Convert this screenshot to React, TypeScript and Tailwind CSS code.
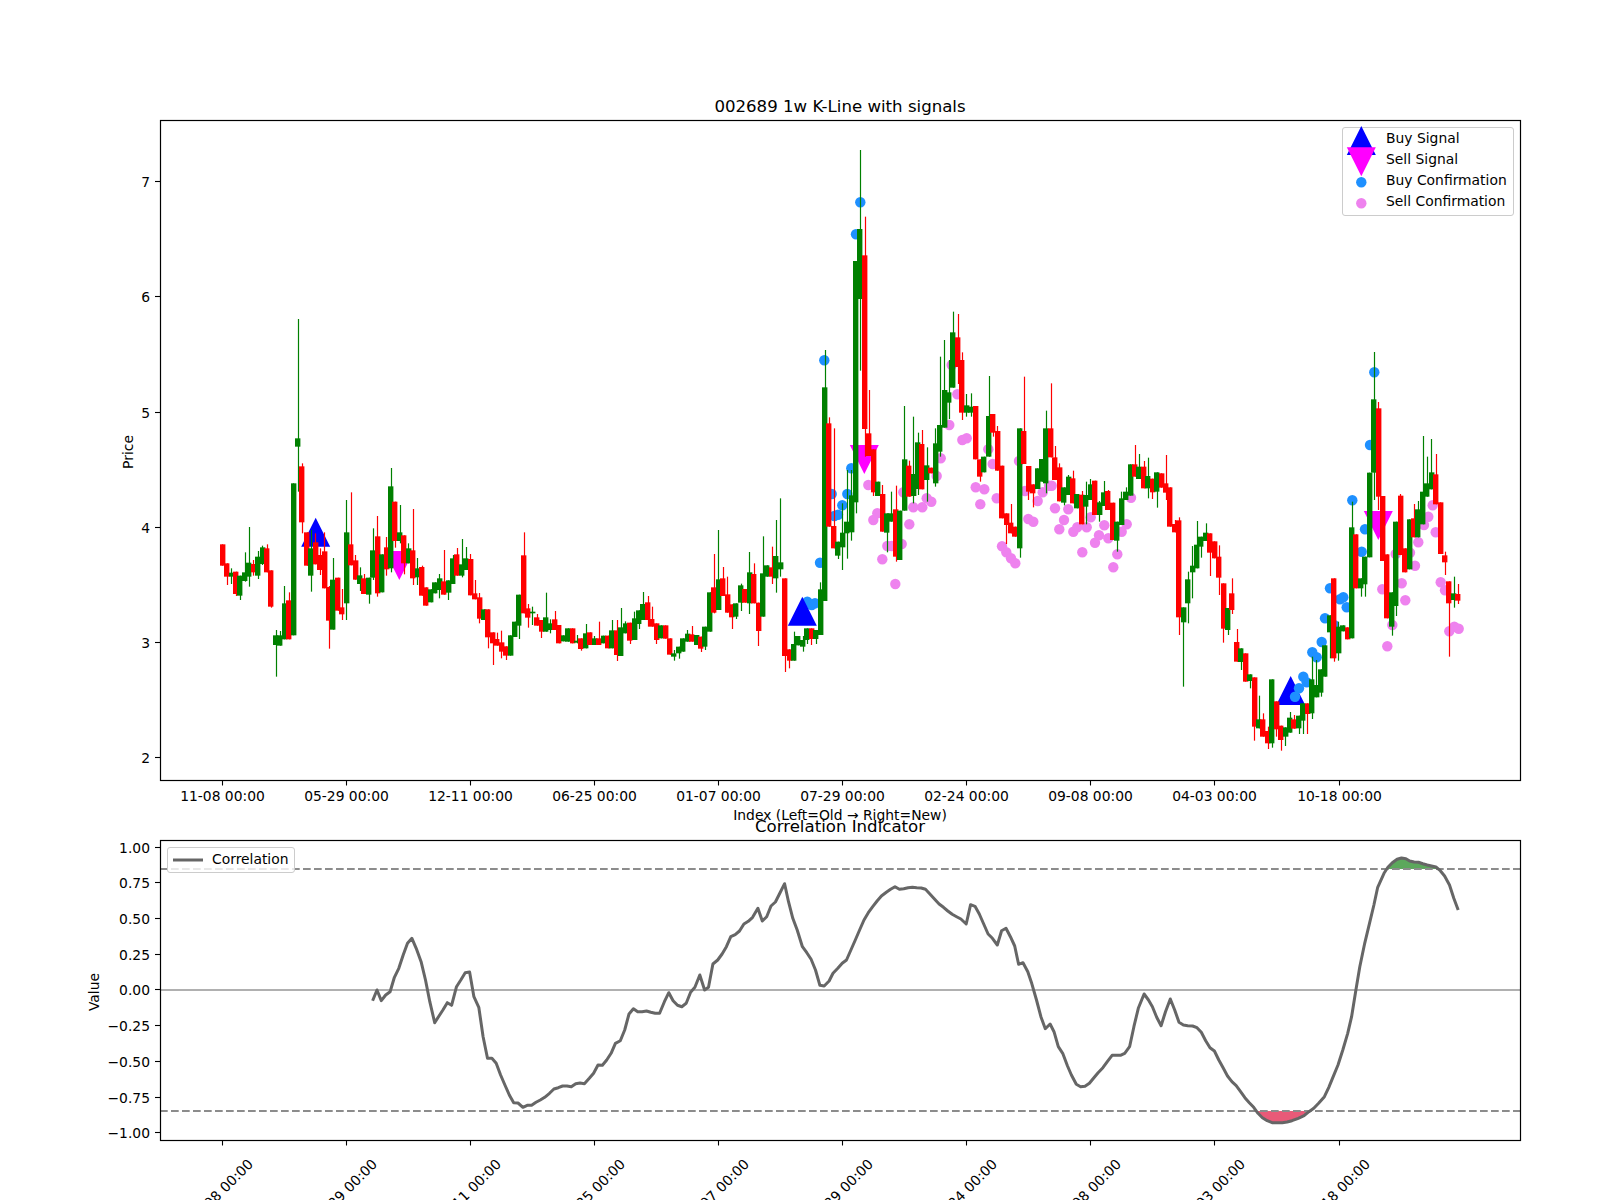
import React from "react";

type C = [number, number, number, number?, number?];
// [red?1:0, bodyTop, bodyBottom, wickTop, wickBottom]
const segA: C[] = [[1,433,497],[1,490,530,,555],[0,518,530,505,552],[1,515,582,,588],[0,527,587,,600],[0,517,543,457,545],[0,488,530,381,560],[1,492,517,480,527],[0,470,527,453,537],[0,442,492,437,495],[1,445,517,433],[1,511,620,,623],[0,706,735,690,830],[0,706,737,693],[0,610,718,558],[1,601,718,577],[0,250,706],[0,115,140,-243,275],[1,199,367,190,400],[1,397,497],[0,445,527,390,575],[1,427,493,400],[1,465,510,445,525],[1,454,565,397],[1,561,662,558,746],[0,539,689,474],[1,533,632],[1,622,643,567,660],[0,397,610,300,660],[1,433,496,277],[1,481,539,465],[0,526,552,502,573],[1,535,582,522],[0,533,584,,611],[0,451,533,385,540],[1,409,580,348,590],[0,463,577],[1,442,508,411,527],[0,259,505,204,517],[1,305,423,,443],[0,397,423,315,430],[1,406,490,,523],[0,445,490,430],[1,451,535,327,555],[0,505,532,474,555],[1,501,587,497],[1,562,617],[0,568,607],[0,547,580],[0,535,570,522,595],[1,544,584,450],[0,541,578,,600],[0,475,552,465],[1,463,527,444],[0,493,527,417,532],[0,475,510,441],[1,477,586,462],[1,580,598,540],[1,592,656,579,670],[0,628,660],[1,628,712,,745],[1,697,730,,795],[1,717,737,698],[1,727,755,692,775],[1,739,767,,780],[0,706,767],[0,665,711],[0,584,677,,717],[1,466,640,397],[1,625,653,612,683],[0,635,640,620,675],[1,652,677,642],[1,660,695,,714],[0,652,695,578],[0,670,690,658,700],[1,658,690,633],[1,675,730],[0,706,724],[0,685,725],[1,685,730],[0,722,728,705,730],[1,715,747,,752],[0,700,745,672],[1,697,735],[0,715,735,708],[1,715,735,665]];
const segB: C[] = [[0,647,670],[1,647,685],[0,631,685,600],[1,631,705,600,723],[0,622,708,564],[0,610,640,604],[1,608,662,,672],[0,595,660,575],[0,571,612,,627],[0,552,600,516],[1,547,600,528,620],[1,597,620,560],[1,610,660,,672],[0,616,655],[1,616,656],[1,655,704],[0,700,710,690,722],[0,680,700,,716],[0,655,695],[0,641,665,630],[1,643,665,618],[0,645,675],[1,650,686,,696],[0,620,680,,690],[0,517,635],[1,502,578,402,580],[0,478,570,330],[1,475,528,441],[1,523,578,470],[1,553,592,,627],[0,550,590,,597],[0,496,548,491,573],[1,507,548],[0,457,550,396,582],[1,462,550,430],[1,548,633,,678],[0,460,590,349],[0,436,470],[1,442,470,380,492],[0,408,475,300,518],[0,427,448,235,470],[1,475,708,,756],[1,688,722,,745],[0,672,722,635],[0,648,676],[0,660,680,648,695],[0,625,660,,672],[1,625,657,,675],[0,630,657,,672],[0,508,645,487],[0,-98,543,-210],[1,10,320,-8],[1,318,385,25],[0,365,407,,417],[0,338,382,250,450],[0,305,340,150,416],[0,226,337,150,362],[0,-477,247,,280],[0,-573,-363,-810,-148],[1,-494,27,-610,110],[1,40,108,-90],[1,88,217,,228],[0,185,228],[1,222,335,195],[0,280,338,,397],[0,280,305,215],[1,268,410,197,425],[0,272,420],[0,118,272,-42],[1,137,230,122],[0,162,228,-10,250],[0,67,207,38,225],[1,72,208,30],[0,136,180,82,245],[1,143,160],[0,70,190,25,200],[0,15,95,-190,110],[0,-90,23,-240],[0,-83,-52,-180,-3],[0,-263,-97,-325],[1,-248,-159,-318,-108],[1,-180,-22,-203,0],[0,-44,-22,-78,-10],[0,-40,-22,-80,-10],[1,-42,118],[1,118,170,,185],[0,110,157],[0,-12,110,-132],[1,-18,38,,50],[1,33,152,18],[1,137,295],[1,280,315,,372],[1,308,340,252],[1,320,350],[0,25,385,,413],[1,33,132,-130],[1,138,215,,240],[1,193,220,,262],[0,145,207],[0,117,185],[0,25,190,-28,220]];
const segC: C[] = [[1,-5,82,-140],[1,82,150,48],[1,112,214,100],[0,172,218,,226],[0,140,195,135],[1,145,220,122],[0,192,235],[1,194,283,183],[0,195,230,155,283],[0,163,210,147],[1,152,255],[0,217,255,213,275],[0,187,228,153],[1,183,240,180],[1,218,330],[0,275,332,,365],[0,205,285,185],[0,185,210,172],[0,103,197],[1,103,140,45],[0,110,147,72],[1,110,175,93],[0,138,175,83,205],[1,146,187,,207],[0,127,185,,233],[1,130,173],[1,160,188,75,210],[1,172,290],[1,282,307,270],[1,271,562,262,615],[0,532,577,,770],[0,448,520,425,580],[0,407,427,348,505],[0,344,415,273],[0,320,350,,383],[0,308,333,280],[1,310,368,,438],[1,334,385],[1,380,443,346,495],[1,460,596,,638],[0,534,600,,615],[1,490,540,445,552],[1,636,695,597],[0,655,696,,720],[1,670,755],[0,733,753,,775],[1,742,890,,932],[0,868,895,797],[1,868,920,850],[1,903,940,890,957],[0,748,940,,953],[1,814,898,,920],[1,887,930,,962],[0,892,920,,948],[0,863,908,846],[1,868,896,855],[0,857,895,,912],[0,820,872,,912],[1,820,852,,912],[0,748,850,680,867],[0,765,802,690],[0,718,788,,800],[0,646,740],[0,556,607,,685],[1,445,685,,695],[0,590,670,575,692],[0,586,604],[1,592,628],[0,292,625,215],[1,313,475],[0,445,475,,500],[0,380,463,,500],[0,128,382],[0,-92,128,-234,210],[1,-65,200,-84,240],[1,198,393],[1,373,565],[0,487,590,,617],[0,275,528,,558],[1,197,375,192],[1,355,427],[0,268,418],[1,265,322,222],[0,238,322,213],[0,185,283,18],[0,160,200,80],[0,127,178,27],[1,133,223,72],[1,217,372],[1,376,397,365,435],[1,454,520,,680],[0,490,510,440,533],[1,492,512,462,522]];

const toPage = (s: C[], y0: number) =>
  s.map(([c, bt, bb, wt, wb]) => ({
    red: c === 1,
    bt: y0 + bt / 3,
    bb: y0 + bb / 3,
    wt: y0 + (wt ?? bt) / 3,
    wb: y0 + (wb ?? bb) / 3,
  }));
const candles = [...toPage(segA, 400), ...toPage(segB, 420), ...toPage(segC, 430)];
const cx = (i: number) => 222.4 + 4.4286 * i;

const buyUnder: [number, number][] = [[807.3,601.7],[811.7,605],[815,603.3]];
const buy: [number, number][] = [[860.3,202.3],[856,234.3],[824.3,360.3],[820,562.7],[851.3,468.3],[847.3,494],[842.3,505.3],[838,514.7],[834.3,516],[831.7,494],[1352.3,500.3],[1365,529.3],[1361.7,551.7],[1370,445],[1374.3,372.3],[1330,588.3],[1343.3,597.3],[1340,599.3],[1346.7,607.3],[1325,618.3],[1334,625],[1321.7,642],[1312.3,652.3],[1316.7,657.3],[1303.3,676.7],[1306.7,682.3],[1299,688.3],[1295,696.7]];
const sell: [number, number][] = [[949.3,425],[957.3,394.3],[951.7,365],[962.3,440],[966.7,438.3],[988.3,449.3],[940.7,458.3],[868.3,485],[992.7,464],[1019,461],[975.7,487.3],[984.3,489.3],[996.7,498.3],[980.3,504.3],[936.7,476],[903.3,492.3],[926.7,498.3],[931.3,501.7],[922.3,507.3],[913.3,507.3],[909.3,524.3],[873.3,520],[877.3,513.3],[882.3,559.3],[887.3,546],[891.7,546],[901.7,544],[895.3,584],[1002,546.3],[1006.3,552.3],[1011,558.3],[1015.3,563.3],[1028.3,519],[1033.3,521.7],[1025,491],[1042.7,492.3],[1037.7,501],[1049,485.7],[1051.7,485.7],[1055,508.3],[1068.3,509.3],[1064,520],[1059.3,529.3],[1073.3,531.7],[1077.3,527.3],[1086.7,527.3],[1090.7,517.3],[1104.3,525.3],[1099,535.3],[1095,542.7],[1108.3,538.3],[1121.7,531.7],[1126.7,524.3],[1131,497.7],[1082.3,552.3],[1117.3,554.3],[1113.3,567.3],[1382.3,589.3],[1401.7,583.3],[1405.3,600.3],[1392.3,625],[1387.3,646.3],[1395.7,554],[1410,552.7],[1415,565.7],[1418.3,542.3],[1424,525],[1428.3,516.7],[1432.7,505.3],[1435.7,532.3],[1440.7,582.3],[1445,590.3],[1449.3,631.3],[1454.3,626.7],[1458.7,628.7]];

const upTri = (x: number, apex: number) => `${x},${apex} ${x + 14.5},${apex + 29} ${x - 14.5},${apex + 29}`;
const downTri = (x: number, top: number) => `${x - 14.5},${top} ${x + 14.5},${top} ${x},${top + 29}`;

const z7: [number, number][] = [[645,692],[654,660],[663,692],[672,675],[681,665],[690,622],[699,595],[708,555],[717,520],[726,505],[735,535],[745,575],[754,630],[763,695],[773,758],[782,738],[790,720],[799,698],[808,706],[818,650],[827,630],[836,608],[845,606],[854,680],[864,712],[873,800],[882,865],[891,865],[900,880],[909,915],[918,945],[927,975],[936,998],[945,999],[955,1012],[964,1006],[973,1006],[982,997],[991,990],[1000,982],[1010,970],[1019,957],[1028,953],[1037,948],[1046,948],[1055,950],[1064,941],[1073,939],[1082,941],[1092,925],[1101,910],[1110,885],[1119,886],[1128,870],[1137,850],[1146,820],[1156,812],[1165,780],[1174,732],[1183,716],[1192,725],[1201,725],[1210,723],[1219,727],[1228,730],[1237,730],[1247,695],[1256,668],[1265,692],[1274,706],[1283,710],[1292,700],[1301,667],[1310,652],[1320,615],[1330,660],[1338,652],[1347,582],[1357,570],[1366,552],[1375,530],[1384,500],[1393,494],[1402,483],[1411,462],[1420,454],[1429,442],[1440,415],[1449,453],[1458,440],[1467,408],[1476,396],[1485,370],[1495,341],[1503,395],[1512,445],[1521,480]];
const z8: [number, number][] = [[5,530],[14,548],[23,568],[32,600],[41,646],[50,648],[60,633],[68,610],[78,595],[87,580],[96,570],[105,540],[114,510],[123,480],[132,450],[141,428],[150,410],[159,393],[168,378],[178,367],[187,358],[196,350],[205,358],[214,356],[223,353],[232,352],[241,353],[250,354],[259,358],[268,372],[278,388],[287,402],[296,412],[305,423],[314,433],[323,440],[332,447],[343,462],[352,404],[361,409],[370,432],[379,462],[388,492],[397,505],[407,525],[416,482],[425,475],[434,500],[443,528],[451,583],[460,578],[470,605],[478,640],[488,690],[497,740],[506,776],[516,762],[524,785],[533,830],[542,850],[552,888],[560,915],[570,943],[579,950],[588,949],[597,940],[606,924],[615,908],[625,893],[634,875],[644,856],[652,856],[661,856],[670,850],[680,830],[689,770],[698,715],[710,672],[719,690],[727,710],[736,742],[745,767],[754,725],[764,687],[773,720],[782,757],[791,765],[800,767],[810,768],[819,773],[828,787],[837,812],[846,833],[855,843],[864,870],[873,893],[882,918],[891,935],[900,947],[909,965],[918,983],[927,998],[936,1012],[945,1030],[954,1043],[964,1052],[974,1058],[985,1058],[995,1058],[1005,1056],[1015,1052],[1028,1045],[1040,1037],[1050,1025],[1060,1015],[1070,1000],[1082,980],[1091,952],[1100,920],[1110,885],[1120,840],[1130,790],[1138,740],[1147,660],[1155,590],[1165,520],[1175,460],[1184,405],[1192,352],[1205,310],[1213,292],[1222,278],[1232,268],[1241,264],[1250,266],[1258,273],[1267,276],[1276,277],[1285,281],[1294,285],[1303,288],[1312,291],[1321,302],[1330,318],[1340,345],[1349,385],[1358,420]];
const corr: [number, number][] = [
  ...z7.map(([x, y]) => [60 + x / 2.0632, 770 + y / 3] as [number, number]),
  ...z8.map(([x, y]) => [800 + x / 2.0632, 770 + y / 3] as [number, number]),
];
const pts = (a: [number, number][]) => a.map((p) => `${p[0].toFixed(1)},${p[1].toFixed(1)}`).join(" ");
const hi = 869;
const lo = 1111;
const fillHi = corr.filter((p) => p[1] < hi && p[0] > 1300);
const fillLo = corr.filter((p) => p[1] > lo);
const hiPoly = [[fillHi[0][0] - 1, hi], ...fillHi, [fillHi[fillHi.length - 1][0] + 1, hi]] as [number, number][];
const loPoly = [[fillLo[0][0] - 1, lo], ...fillLo, [fillLo[fillLo.length - 1][0] + 1, lo]] as [number, number][];

const dates = ["11-08 00:00","05-29 00:00","12-11 00:00","06-25 00:00","01-07 00:00","07-29 00:00","02-24 00:00","09-08 00:00","04-03 00:00","10-18 00:00"];
const tickX = dates.map((_, k) => 222.5 + 124 * k + (k === 9 ? 1 : 0));
const priceTicks = [7, 6, 5, 4, 3, 2].map((v) => ({ v: String(v), y: Math.round(181.4 + (7 - v) * 115.3 - 0.5) + 0.5 }));
const valueTicks = ["1.00","0.75","0.50","0.25","0.00","−0.25","−0.50","−0.75","−1.00"].map((v, k) => ({ v, y: Math.round(847.1 + k * 35.714 - 0.5) + 0.5 }));

const txt = "font-['DejaVu_Sans',sans-serif] text-[13.89px] fill-black";
const ttl = "font-['DejaVu_Sans',sans-serif] text-[16.6px] fill-black";
const lbl = "font-['DejaVu_Sans',sans-serif] text-[13.89px] text-black leading-none whitespace-nowrap";

function PriceLegend() {
  const rows = ["Buy Signal", "Sell Signal", "Buy Confirmation", "Sell Confirmation"];
  return (
    <div className="absolute left-[1342px] top-[127px] w-[172px] h-[89px] rounded-[3px] border border-[#cccccc] bg-white/80 pl-[43px]">
      <svg className="absolute left-[-1px] top-[-1px] overflow-visible" width="172" height="88">
        <polygon points={upTri(19.3, -1)} fill="#0000ff" />
        <polygon points={downTri(19.3, 20.3)} fill="#ff00ff" />
        <circle cx="19.3" cy="55.3" r="5.2" fill="#1e90ff" />
        <circle cx="19.3" cy="76.3" r="5.2" fill="#ee82ee" />
      </svg>
      {rows.map((r) => (
        <div key={r} className={`relative h-[21px] flex items-center ${lbl}`}>{r}</div>
      ))}
    </div>
  );
}

function CorrLegend() {
  return (
    <div className="absolute left-[167px] top-[37px] w-[128px] h-[26px] rounded-[3px] border border-[#cccccc] bg-white/80 flex items-center pl-[5px] gap-[9px]">
      <svg width="30" height="4" className="shrink-0">
        <line x1="0" x2="30" y1="2" y2="2" stroke="#666666" strokeWidth="3" />
      </svg>
      <span className={lbl}>Correlation</span>
    </div>
  );
}

export default function App() {
  return (
    <div className="w-[1600px] h-[1200px] bg-white overflow-hidden flex flex-col">
      <div className="relative h-[810px] shrink-0">
        <svg width="1600" height="810" viewBox="0 0 1600 810" className="block overflow-visible">
          <text x="840" y="112" textAnchor="middle" className={ttl}>002689 1w K-Line with signals</text>
          <polygon points={upTri(315.7, 517.7)} fill="#0000ff" />
          <polygon points={downTri(399.3, 551)} fill="#ff00ff" />
          {buyUnder.map(([x, y], i) => <circle key={i} cx={x} cy={y} r="5.2" fill="#1e90ff" />)}
          <polygon points={upTri(802.3, 596.7)} fill="#0000ff" />
          <polygon points={downTri(864.3, 445)} fill="#ff00ff" />
          <polygon points={upTri(1290.7, 676)} fill="#0000ff" />
          <polygon points={downTri(1378.3, 511)} fill="#ff00ff" />
          {sell.map(([x, y], i) => <circle key={i} cx={x} cy={y} r="5.2" fill="#ee82ee" />)}
          {buy.map(([x, y], i) => <circle key={i} cx={x} cy={y} r="5.2" fill="#1e90ff" />)}
          {candles.map((c, i) => {
            const col = c.red ? "#ff0000" : "#008000";
            const x = cx(i);
            return (
              <g key={i}>
                <line x1={Math.round(x) + 0.5} x2={Math.round(x) + 0.5} y1={c.wt} y2={c.wb} stroke={col} strokeWidth="1.2" />
                <rect x={Math.round(x - 2.7)} y={c.bt} width="5.4" height={c.bb - c.bt} fill={col} />
              </g>
            );
          })}
          <rect x="160.5" y="120.5" width="1360" height="660" fill="none" stroke="#000" strokeWidth="1.2" />
          {priceTicks.map((t) => (
            <g key={t.v}>
              <line x1="155" x2="160" y1={t.y} y2={t.y} stroke="#000" strokeWidth="1.1" />
              <text x="150" y={t.y + 5.4} textAnchor="end" className={txt}>{t.v}</text>
            </g>
          ))}
          {dates.map((d, k) => (
            <g key={d}>
              <line x1={tickX[k]} x2={tickX[k]} y1="781" y2="785.5" stroke="#000" strokeWidth="1.1" />
              <text x={tickX[k]} y="801" textAnchor="middle" className={txt}>{d}</text>
            </g>
          ))}
          <text x="840" y="820" textAnchor="middle" className={txt}>Index (Left=Old → Right=New)</text>
          <text transform="translate(133,452) rotate(-90)" textAnchor="middle" className={txt}>Price</text>
        </svg>
        <PriceLegend />
      </div>
      <div className="relative h-[390px] shrink-0">
        <svg width="1600" height="390" viewBox="0 810 1600 390" className="block overflow-visible">
          <text x="840" y="832" textAnchor="middle" className={ttl}>Correlation Indicator</text>
          <polygon points={pts(hiPoly)} fill="#5ca85c" />
          <polygon points={pts(loPoly)} fill="#e85a78" />
          <line x1="160" x2="1520" y1="990" y2="990" stroke="#b0b0b0" strokeWidth="2" />
          <line x1="160" x2="1520" y1={hi} y2={hi} stroke="#8c8c8c" strokeWidth="2" strokeDasharray="7.7 3.3" />
          <line x1="160" x2="1520" y1={lo} y2={lo} stroke="#8c8c8c" strokeWidth="2" strokeDasharray="7.7 3.3" />
          <polyline points={pts(corr)} fill="none" stroke="#666666" strokeWidth="3" strokeLinejoin="round" />
          <rect x="160.5" y="840.5" width="1360" height="300" fill="none" stroke="#000" strokeWidth="1.2" />
          {valueTicks.map((t) => (
            <g key={t.v}>
              <line x1="155" x2="160" y1={t.y} y2={t.y} stroke="#000" strokeWidth="1.1" />
              <text x="150" y={t.y + 5.4} textAnchor="end" className={txt}>{t.v}</text>
            </g>
          ))}
          {dates.map((d, k) => (
            <g key={d}>
              <line x1={tickX[k]} x2={tickX[k]} y1="1141" y2="1145.5" stroke="#000" strokeWidth="1.1" />
              <text transform={`translate(${tickX[k] + 1.5},1195) rotate(-45)`} textAnchor="middle" className={txt}>{d}</text>
            </g>
          ))}
          <text transform="translate(99,992) rotate(-90)" textAnchor="middle" className={txt}>Value</text>
        </svg>
        <CorrLegend />
      </div>
    </div>
  );
}
